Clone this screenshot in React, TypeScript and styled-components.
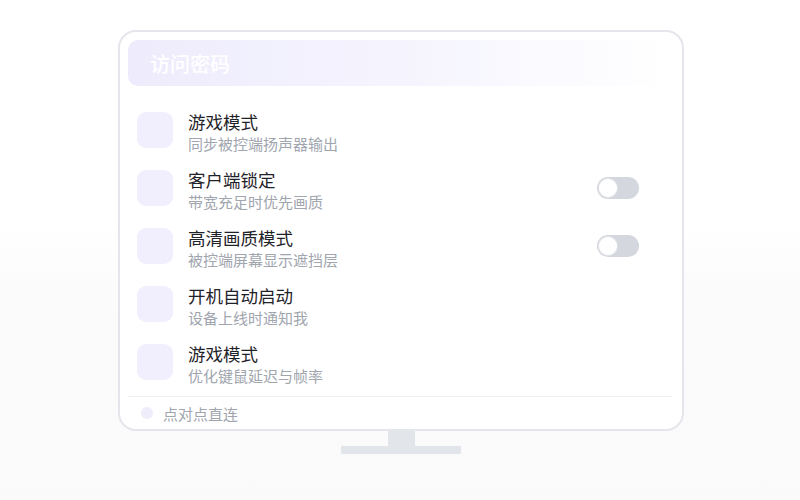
import React from 'react';
import styled, { createGlobalStyle } from 'styled-components';

const GlobalStyle = createGlobalStyle`
    html, body {
        margin: 0;
        padding: 0;
    }
    body {
        font-family: "Noto Sans CJK SC", "Noto Sans", sans-serif;
        background: linear-gradient(180deg, #ffffff 0%, #ffffff 45%, #fbfbfc 60%, #fafafb 100%);
    }
    #root {
        height: 500px;
    }
`

const Page = styled.div`
    display: flex;
    flex-direction: column;
    align-items: center;
    padding: 30px 0 0 2px;
    height: 500px;
    box-sizing: border-box;
`

const Screen = styled.div`
    width: 566px;
    height: 401px;
    box-sizing: border-box;
    border: 2px solid #e4e6eb;
    border-radius: 18px;
    background: #ffffff;
    padding: 8px 10px 0 8px;
    display: flex;
    flex-direction: column;
`

const Header = styled.div`
    display: flex;
    align-items: center;
    justify-content: space-between;
    height: 46px;
    padding: 0 26px 0 22px;
    border-radius: 10px;
    background: linear-gradient(90deg, #eeecfc 0%, #f4f3fe 45%, #fbfbff 80%, #ffffff 100%);
`

const Title = styled.h1`
    margin: 0;
    font-size: 20px;
    font-weight: 500;
    color: #ffffff;
`

const Dots = styled.div`
    display: flex;
    gap: 10px;
    opacity: 0.9;
`

const Dot = styled.span`
    width: 5px;
    height: 5px;
    border-radius: 50%;
    background: #ffffff;
`

const List = styled.div`
    display: flex;
    flex-direction: column;
    gap: 22px;
    padding: 26px 33px 0 9px;
`

const Row = styled.div`
    display: flex;
    align-items: center;
    height: 36px;
`

const IconBox = styled.div`
    width: 36px;
    height: 36px;
    border-radius: 9px;
    background: #f1effd;
    flex-shrink: 0;
`

const Texts = styled.div`
    display: flex;
    flex-direction: column;
    align-self: flex-start;
    margin: -1px 0 0 15px;
    flex: 1;
`

const RowTitle = styled.span`
    font-size: 17.5px;
    line-height: 22px;
    color: #1f2329;
`

const RowSub = styled.span`
    font-size: 15px;
    line-height: 22px;
    color: #a0a5ae;
`

const Toggle = styled.div`
    width: 42px;
    height: 22px;
    border-radius: 11px;
    background: #d4d7dd;
    box-sizing: border-box;
    padding: 2px;
    display: flex;
    align-items: center;
`

const Knob = styled.span`
    width: 18px;
    height: 18px;
    border-radius: 50%;
    background: #ffffff;
    box-shadow: 0 0 0 1px #e3e5e9;
`

const Divider = styled.div`
    height: 1px;
    background: #eff0f3;
    margin-top: 16px;
`

const Footer = styled.div`
    display: flex;
    align-items: center;
    gap: 10px;
    height: 32px;
    padding-left: 13px;
`

const FooterDot = styled.span`
    width: 12px;
    height: 12px;
    border-radius: 50%;
    background: #efedfc;
`

const FooterText = styled.span`
    font-size: 15px;
    color: #a0a5ae;
`

const Neck = styled.div`
    width: 27px;
    height: 15px;
    background: #e2e5ea;
`

const Base = styled.div`
    width: 120px;
    height: 8px;
    background: #e2e5ea;
`

const rows = [
    { title: '游戏模式', sub: '同步被控端扬声器输出', toggle: false },
    { title: '客户端锁定', sub: '带宽充足时优先画质', toggle: true },
    { title: '高清画质模式', sub: '被控端屏幕显示遮挡层', toggle: true },
    { title: '开机自动启动', sub: '设备上线时通知我', toggle: false },
    { title: '游戏模式', sub: '优化键鼠延迟与帧率', toggle: false },
];

export default function App() {
    return (
        <>
            <GlobalStyle />
            <Page>
                <Screen>
                    <Header>
                        <Title>访问密码</Title>
                        <Dots>
                            <Dot />
                            <Dot />
                            <Dot />
                        </Dots>
                    </Header>
                    <List>
                        {rows.map((r, i) => (
                            <Row key={i}>
                                <IconBox />
                                <Texts>
                                    <RowTitle>{r.title}</RowTitle>
                                    <RowSub>{r.sub}</RowSub>
                                </Texts>
                                {r.toggle && (
                                    <Toggle>
                                        <Knob />
                                    </Toggle>
                                )}
                            </Row>
                        ))}
                    </List>
                    <Divider />
                    <Footer>
                        <FooterDot />
                        <FooterText>点对点直连</FooterText>
                    </Footer>
                </Screen>
                <Neck />
                <Base />
            </Page>
        </>
    )
}
